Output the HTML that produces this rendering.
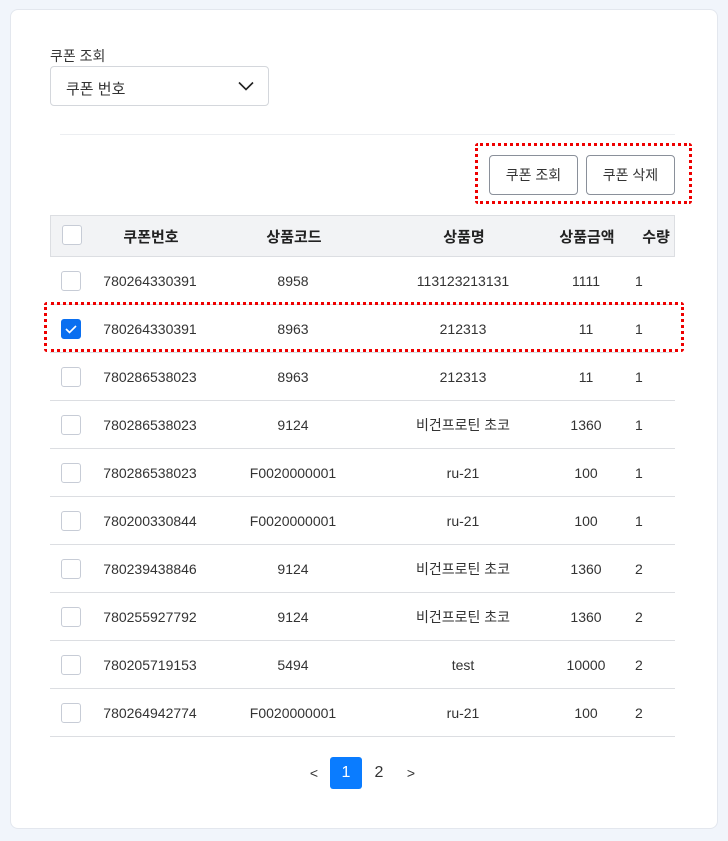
<!DOCTYPE html>
<html><head><meta charset="utf-8"><style>
*{box-sizing:border-box;margin:0;padding:0}
body{width:728px;height:841px;background:#f1f5fb;font-family:"Liberation Sans","Noto Sans CJK KR",sans-serif;color:#333;position:relative;overflow:hidden}
.card{position:absolute;left:10px;top:9px;width:708px;height:820px;background:#fff;border:1px solid #e3e7ee;border-radius:8px}
.a{position:absolute}
.lbl{left:50px;top:46px;font-size:14px;color:#333}
.sel{left:50px;top:66px;width:219px;height:40px;border:1px solid #d4d7dc;border-radius:4px;font-size:15px;padding:11px 0 0 15px}
.div{left:60px;top:134px;width:615px;height:1px;background:#eceef1}
.btn{top:155px;width:89px;height:40px;border:1px solid #8a909a;border-radius:4px;font-size:14px;text-align:center;line-height:38px;background:#fff}
.dash{border:3px dotted #e00;border-radius:3px}
.hdr{left:50px;top:215px;width:625px;height:42px;background:#f2f3f5;border:1px solid #dcdee2}
.row{left:50px;width:625px;height:48px;border-bottom:1px solid #dcdee2}
.c{position:absolute;top:0;height:100%;display:flex;align-items:center;justify-content:center;font-size:14px}
.h .c{font-weight:bold;font-size:15px;color:#222}
.cb{position:absolute;left:11px;width:20px;height:20px;border:1px solid #c7ccd6;border-radius:3px;background:#fff}
.on{background:#0a6ff0;border-color:#0a6ff0}
.pg{top:757px;height:32px;font-size:16px;line-height:32px;text-align:center}
</style></head><body>
<div class="card"></div>
<div class="a lbl">쿠폰 조회</div>
<div class="a sel">쿠폰 번호
<svg style="position:absolute;left:187px;top:14px" width="16" height="10" viewBox="0 0 16 10"><path d="M1 1.5L8 8.5L15 1.5" fill="none" stroke="#222" stroke-width="1.6"/></svg></div>
<div class="a div"></div>
<div class="a dash" style="left:475px;top:143px;width:217px;height:61px"></div>
<div class="a btn" style="left:489px">쿠폰 조회</div>
<div class="a btn" style="left:586px">쿠폰 삭제</div>
<div class="a hdr h">
<div class="cb" style="top:9px"></div>
<div class="c" style="left:50px;width:100px">쿠폰번호</div>
<div class="c" style="left:193px;width:100px">상품코드</div>
<div class="c" style="left:363px;width:100px">상품명</div>
<div class="c" style="left:501px;width:70px">상품금액</div>
<div class="c" style="left:580px;width:50px">수량</div>
</div>
<div id="rows"></div>
<div class="a dash" style="left:44px;top:302px;width:640px;height:50px"></div>
<div class="a pg" style="left:306px;width:16px;font-size:14px">&lt;</div>
<div class="a pg" style="left:330px;width:32px;background:#0a7cff;color:#fff;border-radius:3px">1</div>
<div class="a pg" style="left:370px;width:18px">2</div>
<div class="a pg" style="left:403px;width:16px;font-size:14px">&gt;</div>
<script>
var d=[["780264330391","8958","113123213131","1111","1"],["780264330391","8963","212313","11","1"],["780286538023","8963","212313","11","1"],["780286538023","9124","비건프로틴 초코","1360","1"],["780286538023","F0020000001","ru-21","100","1"],["780200330844","F0020000001","ru-21","100","1"],["780239438846","9124","비건프로틴 초코","1360","2"],["780255927792","9124","비건프로틴 초코","1360","2"],["780205719153","5494","test","10000","2"],["780264942774","F0020000001","ru-21","100","2"]];
var h="";d.forEach(function(r,i){var t=257+i*48;
h+='<div class="a row" style="top:'+t+'px"><div class="cb'+(i==1?' on':'')+'" style="top:14px">'+(i==1?'<svg width="18" height="18" viewBox="0 0 18 18"><path d="M4 9l3.5 3.5L14 6" fill="none" stroke="#fff" stroke-width="1.6"/></svg>':'')+'</div>'+
'<div class="c" style="left:50px;width:100px">'+r[0]+'</div><div class="c" style="left:193px;width:100px">'+r[1]+'</div><div class="c" style="left:363px;width:100px">'+r[2]+'</div><div class="c" style="left:501px;width:70px">'+r[3]+'</div><div class="c" style="left:585px;justify-content:flex-start">'+r[4]+'</div></div>';});
document.getElementById("rows").innerHTML=h;
</script>
</body></html>
